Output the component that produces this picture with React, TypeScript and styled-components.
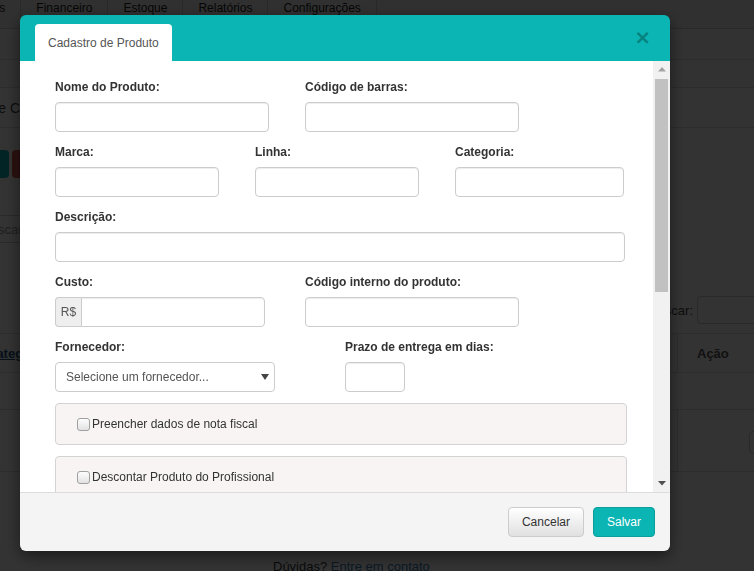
import React from 'react';
import styled, { createGlobalStyle, css } from 'styled-components';

const teal = '#0bb5b3';
const font = '"Liberation Sans", Arial, Helvetica, sans-serif';

const GlobalStyle = createGlobalStyle`
  html, body {
    margin: 0;
    padding: 0;
  }
  body {
    width: 754px;
    height: 571px;
    overflow: hidden;
    background: #fff;
    font-family: ${font};
    font-size: 12px;
    color: #333;
  }
  * {
    box-sizing: border-box;
  }
`;

/* ---------- page behind the modal ---------- */

const Page = styled.div`
  margin-left: -53px;
  width: 860px;
  background: #fff;
  color: #555;
`;

const Nav = styled.nav`
  height: 29px;
  display: flex;
  background: #eee;
  border-bottom: 1px solid #ccc;
`;

const NavItem = styled.a`
  padding: 0 15px;
  line-height: 16px;
  border-right: 1px solid #ccc;
  color: #222;
  font-size: 12px;
`;

const Bar = styled.div<{ $h: number }>`
  height: ${p => p.$h}px;
  background: #f7f7f7;
  border-bottom: 1px solid #ddd;
`;

const TitleRow = styled.div`
  height: 40px;
  display: flex;
  align-items: center;
  padding-left: 10px;
  font-size: 14px;
  color: #444;
  border-bottom: 1px solid #ddd;
`;

const Toolbar = styled.div`
  display: flex;
  gap: 3px;
  margin-top: 22px;
  padding-left: 15px;
`;

const PageButton = styled.span<{ $color: string; $w: number }>`
  width: ${p => p.$w}px;
  height: 28px;
  border-radius: 4px;
  background: ${p => p.$color};
`;

const SearchBox = styled.div`
  margin: 37px 0 0 24px;
  width: 220px;
  height: 28px;
  border: 1px solid #ccc;
  border-radius: 4px;
  padding-left: 10px;
  display: flex;
  align-items: center;
  color: #999;
  font-size: 13px;
`;

const TableTools = styled.div`
  display: flex;
  justify-content: flex-end;
  align-items: center;
  gap: 4px;
  margin-top: 53px;
  font-size: 13px;
  color: #444;
`;

const ToolInput = styled.div`
  width: 110px;
  height: 28px;
  border: 1px solid #ccc;
  border-radius: 4px;
`;

const TableRow = styled.div<{ $h: number; $head?: boolean }>`
  height: ${p => p.$h}px;
  display: flex;
  align-items: ${p => (p.$head ? 'center' : 'flex-start')};
  border-bottom: 1px solid #ddd;
  ${p => p.$head && css`
    margin-top: 9px;
    border-top: 1px solid #ddd;
    font-weight: bold;
    font-size: 13px;
  `}
`;

const Cell = styled.div<{ $w?: number }>`
  ${p => (p.$w ? `width: ${p.$w}px;` : 'flex: 1;')}
  height: 100%;
  display: flex;
  align-items: center;
  padding-left: 19px;
  border-right: 1px solid #ddd;
  &:first-child {
    padding-left: 40px;
  }
  &:last-child {
    border-right: 0;
  }
`;

const HeadLink = styled.a`
  color: #23527c;
  text-decoration: underline;
`;

const SmallBox = styled.span`
  margin: 3px 0 0 52px;
  width: 40px;
  height: 23px;
  border: 1px solid #ccc;
  border-radius: 4px;
`;

const PageFooter = styled.div`
  margin-top: 87px;
  padding-left: 326px;
  line-height: 16px;
  font-size: 13px;
  color: #333;
  a {
    color: #337ab7;
  }
`;

const Backdrop = styled.div`
  position: fixed;
  inset: 0;
  background: rgba(0, 0, 0, 0.8);
`;

/* ---------- modal ---------- */

const Modal = styled.div`
  position: fixed;
  top: 15px;
  left: 20px;
  width: 650px;
  height: 536px;
  display: flex;
  flex-direction: column;
  border-radius: 6px;
  overflow: hidden;
  box-shadow: 0 5px 15px rgba(0, 0, 0, 0.5);
`;

const Header = styled.div`
  height: 46px;
  flex-shrink: 0;
  display: flex;
  align-items: flex-end;
  padding: 0 19px 0 15px;
  background: ${teal};
`;

const Tab = styled.div`
  height: 37px;
  display: flex;
  align-items: center;
  padding: 0 13px;
  background: #fff;
  border-radius: 4px 4px 0 0;
  color: #555;
  font-size: 12px;
`;

const Close = styled.button`
  margin-left: auto;
  align-self: center;
  margin-bottom: 2px;
  padding: 0;
  border: 0;
  background: none;
  font-family: "DejaVu Sans", ${font};
  font-size: 20px;
  font-weight: bold;
  line-height: 1;
  color: #06827f;
`;

const BodyWrap = styled.div`
  height: 431px;
  flex-shrink: 0;
  display: flex;
  background: #fff;
`;

const Content = styled.div`
  flex: 1;
  overflow: hidden;
  padding: 17px 26px 0 35px;
`;

const ScrollTrack = styled.div`
  width: 17px;
  display: flex;
  flex-direction: column;
  align-items: center;
  background: #f1f1f1;
`;

const ScrollBtn = styled.div<{ $dim?: boolean }>`
  width: 17px;
  height: 17px;
  flex-shrink: 0;
  display: flex;
  align-items: center;
  justify-content: center;
  color: ${p => (p.$dim ? '#a3a3a3' : '#505050')};
`;

const Thumb = styled.div`
  width: 13px;
  height: 213px;
  margin-top: 1px;
  background: #c1c1c1;
`;

const TrackSpace = styled.div`
  flex: 1;
`;

const FormRow = styled.div<{ $cols: string }>`
  display: grid;
  grid-template-columns: ${p => p.$cols};
  margin-bottom: 11px;
`;

const Field = styled.div`
  display: flex;
  flex-direction: column;
  align-items: flex-start;
`;

const Label = styled.label`
  font-size: 12px;
  font-weight: bold;
  line-height: 18px;
  margin-bottom: 6px;
  color: #333;
`;

const TextInput = styled.input<{ $w?: number }>`
  width: ${p => (p.$w ? `${p.$w}px` : 'auto')};
  height: 30px;
  padding: 0 10px;
  border: 1px solid #ccc;
  border-radius: 4px;
  background: #fff;
  box-shadow: inset 0 1px 1px rgba(0, 0, 0, 0.075);
  font: 12px ${font};
  color: #555;
`;

const InputGroup = styled.div<{ $w: number }>`
  width: ${p => p.$w}px;
  height: 30px;
  display: flex;
`;

const Addon = styled.span`
  width: 26px;
  display: flex;
  align-items: center;
  justify-content: center;
  background: #eee;
  border: 1px solid #ccc;
  border-right: 0;
  border-radius: 4px 0 0 4px;
  color: #555;
  font-size: 12px;
`;

const GroupInput = styled(TextInput)`
  flex: 1;
  min-width: 0;
  border-radius: 0 4px 4px 0;
`;

const SelectWrap = styled.div`
  position: relative;
  width: 220px;
`;

const Select = styled.select`
  appearance: none;
  width: 100%;
  height: 30px;
  padding: 0 24px 0 10px;
  border: 1px solid #ccc;
  border-radius: 4px;
  background: #fff;
  font: 12px ${font};
  color: #555;
`;

const Caret = styled.svg`
  position: absolute;
  right: 6px;
  top: 12px;
  pointer-events: none;
`;

const Panel = styled.div`
  width: 572px;
  height: 42px;
  flex-shrink: 0;
  display: flex;
  align-items: center;
  padding-left: 21px;
  margin-bottom: 11px;
  background: #f9f4f4;
  border: 1px solid #d3d3d3;
  border-radius: 4px;
`;

const CheckLabel = styled.label`
  display: flex;
  align-items: center;
  gap: 2px;
  font-size: 12px;
  color: #333;
`;

const Check = styled.input`
  appearance: none;
  margin: 0;
  width: 13px;
  height: 13px;
  border: 1px solid #a0a0a0;
  border-radius: 3px;
  background: linear-gradient(#fdfdfd, #e2e2e2);
`;

const Footer = styled.div`
  height: 59px;
  flex-shrink: 0;
  display: flex;
  justify-content: flex-end;
  align-items: center;
  gap: 9px;
  padding: 0 15px;
  background: #f4f4f4;
  border-top: 1px solid #ddd;
`;

const Button = styled.button<{ $primary?: boolean }>`
  height: 30px;
  padding: 0 13px;
  border-radius: 4px;
  font: 12px ${font};
  ${p =>
    p.$primary
      ? css`
          background: ${teal};
          border: 1px solid #0a9f9d;
          color: #fff;
        `
      : css`
          background: linear-gradient(#fff, #e0e0e0);
          border: 1px solid #ccc;
          color: #333;
        `}
`;

const Triangle = ({ down }: { down?: boolean }) => (
  <svg width="8" height="5" viewBox="0 0 8 5">
    <path d={down ? 'M0 0H8L4 4.5Z' : 'M0 4.5H8L4 0Z'} fill="currentColor" />
  </svg>
);

export default function App() {
  return (
    <>
      <GlobalStyle />
      <Page>
        <Nav>
          <NavItem>Clientes</NavItem>
          <NavItem>Financeiro</NavItem>
          <NavItem>Estoque</NavItem>
          <NavItem>Relatórios</NavItem>
          <NavItem>Configurações</NavItem>
        </Nav>
        <Bar $h={31} />
        <Bar $h={28} />
        <TitleRow>Lista de Contas</TitleRow>
        <Toolbar>
          <PageButton $color={teal} $w={47} />
          <PageButton $color="#d9534f" $w={60} />
        </Toolbar>
        <SearchBox>Buscar...</SearchBox>
        <TableTools>
          Buscar:
          <ToolInput />
        </TableTools>
        <TableRow $h={40} $head>
          <Cell>
            <HeadLink>Categoria</HeadLink>
          </Cell>
          <Cell $w={129}>Ação</Cell>
        </TableRow>
        <TableRow $h={37} />
        <TableRow $h={62}>
          <Cell />
          <Cell $w={129}>
            <SmallBox />
          </Cell>
        </TableRow>
        <PageFooter>
          Dúvidas? <a>Entre em contato</a>
        </PageFooter>
      </Page>

      <Backdrop />

      <Modal>
        <Header>
          <Tab>Cadastro de Produto</Tab>
          <Close aria-label="Fechar">×</Close>
        </Header>

        <BodyWrap>
          <Content>
            <FormRow $cols="250px 250px">
              <Field>
                <Label>Nome do Produto:</Label>
                <TextInput $w={214} />
              </Field>
              <Field>
                <Label>Código de barras:</Label>
                <TextInput $w={214} />
              </Field>
            </FormRow>

            <FormRow $cols="200px 200px 170px">
              <Field>
                <Label>Marca:</Label>
                <TextInput $w={164} />
              </Field>
              <Field>
                <Label>Linha:</Label>
                <TextInput $w={164} />
              </Field>
              <Field>
                <Label>Categoria:</Label>
                <TextInput $w={169} />
              </Field>
            </FormRow>

            <FormRow $cols="570px">
              <Field>
                <Label>Descrição:</Label>
                <TextInput $w={570} />
              </Field>
            </FormRow>

            <FormRow $cols="250px 250px">
              <Field>
                <Label>Custo:</Label>
                <InputGroup $w={210}>
                  <Addon>R$</Addon>
                  <GroupInput />
                </InputGroup>
              </Field>
              <Field>
                <Label>Código interno do produto:</Label>
                <TextInput $w={214} />
              </Field>
            </FormRow>

            <FormRow $cols="290px 200px">
              <Field>
                <Label>Fornecedor:</Label>
                <SelectWrap>
                  <Select defaultValue="">
                    <option value="">Selecione um fornecedor...</option>
                  </Select>
                  <Caret width="8" height="6" viewBox="0 0 8 6">
                    <path d="M0 0H8L4 6Z" fill="#444" />
                  </Caret>
                </SelectWrap>
              </Field>
              <Field>
                <Label>Prazo de entrega em dias:</Label>
                <TextInput $w={60} />
              </Field>
            </FormRow>

            <Panel>
              <CheckLabel>
                <Check type="checkbox" />
                Preencher dados de nota fiscal
              </CheckLabel>
            </Panel>
            <Panel>
              <CheckLabel>
                <Check type="checkbox" />
                Descontar Produto do Profissional
              </CheckLabel>
            </Panel>
          </Content>

          <ScrollTrack>
            <ScrollBtn $dim>
              <Triangle />
            </ScrollBtn>
            <Thumb />
            <TrackSpace />
            <ScrollBtn>
              <Triangle down />
            </ScrollBtn>
          </ScrollTrack>
        </BodyWrap>

        <Footer>
          <Button>Cancelar</Button>
          <Button $primary>Salvar</Button>
        </Footer>
      </Modal>
    </>
  );
}
